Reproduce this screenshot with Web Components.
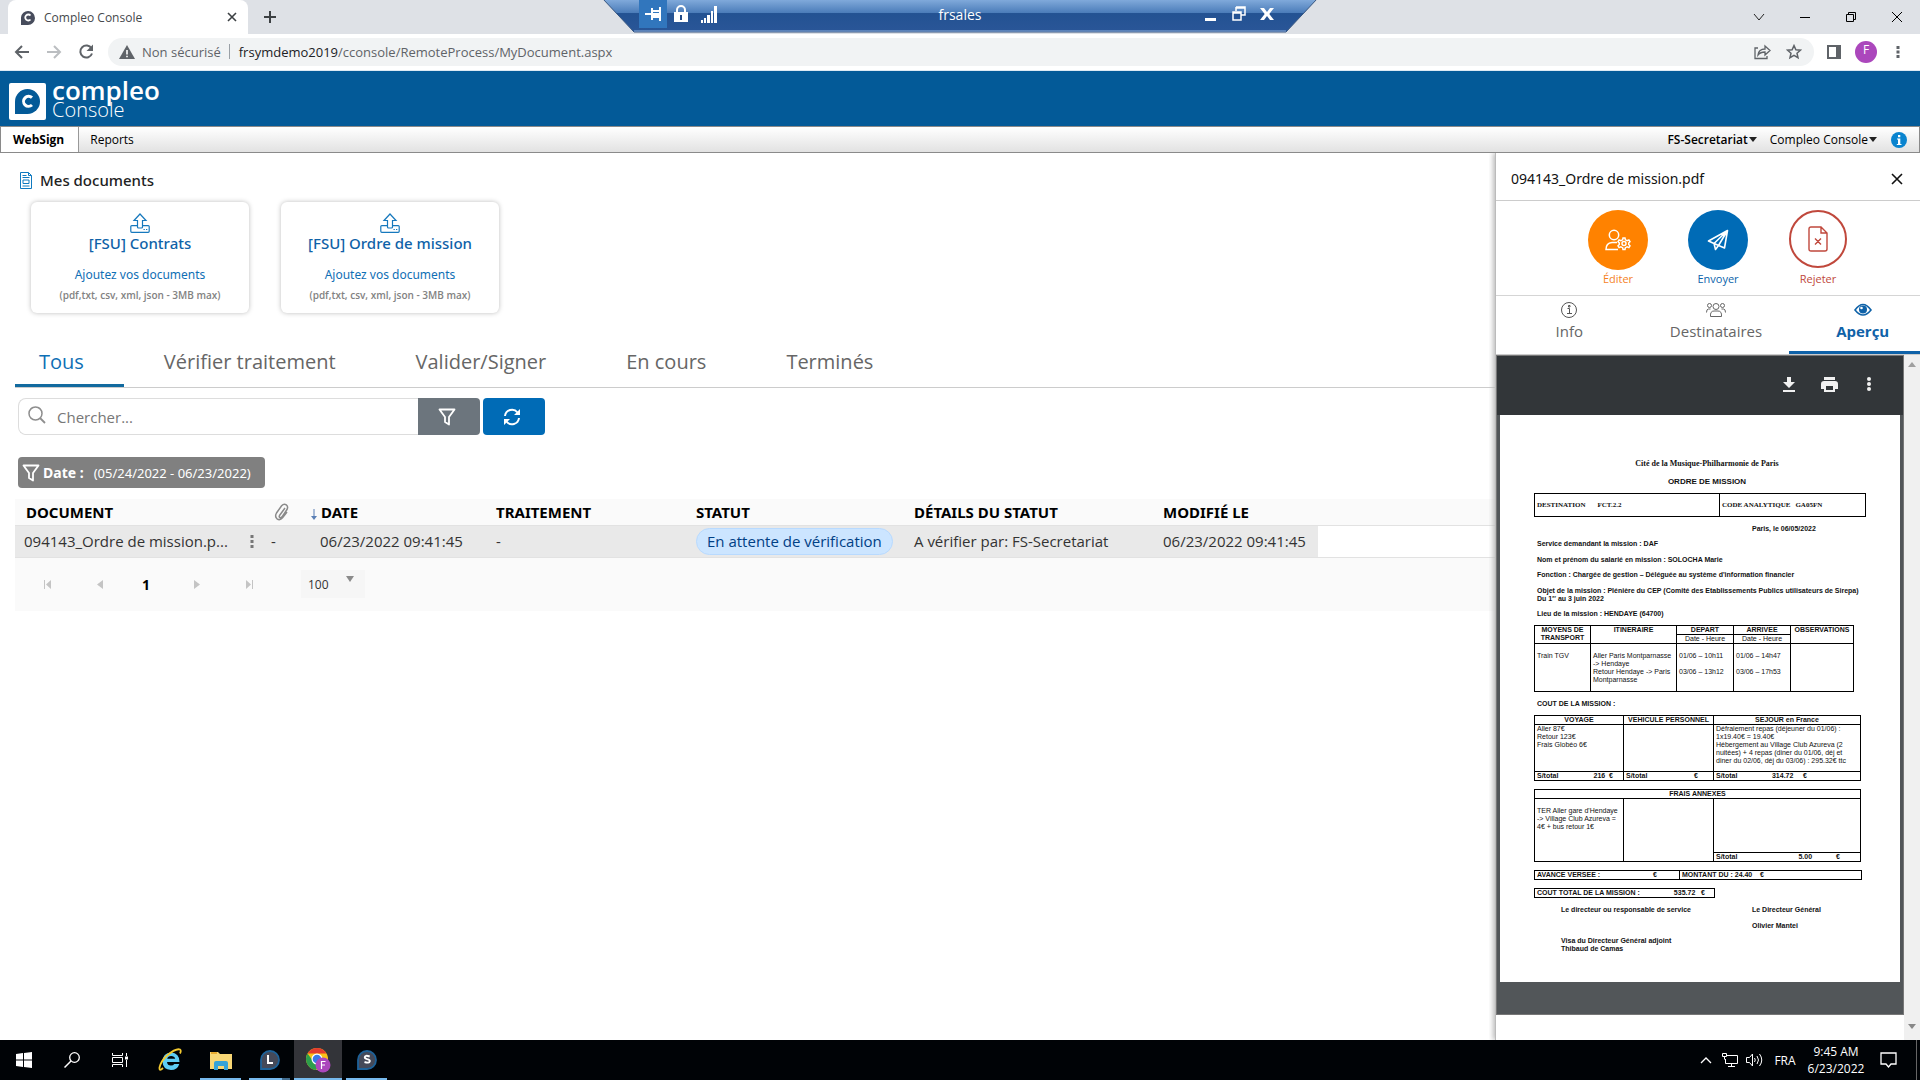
<!DOCTYPE html>
<html lang="fr">
<head>
<meta charset="utf-8">
<title>Compleo Console</title>
<style>
html,body{margin:0;height:100%}
body{font-family:"Open Sans","Noto Sans",sans-serif;font-size:15px;color:#333;background:#fff;overflow:hidden}
</style>
</head>
<body>
<app-desktop></app-desktop>
<script>
const RESET = `*{box-sizing:border-box}
button,input,select{font:inherit;color:inherit;margin:0;padding:0;border:0;background:none;border-radius:0}
button{display:flex;align-items:center;justify-content:center}
a{color:inherit;text-decoration:none}
svg{display:block;flex:none}
h1,h2,p{margin:0;font-weight:400}
table{border-collapse:collapse}`;

function sheet(css, html) {
  const t = document.createElement('template');
  t.innerHTML = `<style>${RESET}${css}</style>${html}`;
  return t;
}
class Shadowed extends HTMLElement {
  constructor() {
    super();
    this.attachShadow({mode: 'open'}).append(this.constructor.template.content.cloneNode(true));
  }
}

/* Remote desktop connection bar */
class RemoteBar extends Shadowed {
  static template = sheet(`
:host{display:block;width:716px;height:33px;color:#fff;font-size:14px}
.bar{height:33px;padding:0 37px 5px;display:flex;align-items:center;justify-content:space-between;position:relative}
.bg{position:absolute;inset:0;width:100%;height:100%}
.side{display:flex;align-items:center;position:relative;width:110px;height:28px}
.side button{width:28px;height:28px}
.side .pin{background:#3176bd}
.name{position:relative}
.side.r{justify-content:flex-end}`,
`<div class="bar">
<svg class="bg" viewBox="0 0 716 33" preserveAspectRatio="none"><defs><linearGradient id="g" x2="0" y2="1"><stop offset="0" stop-color="#84addd"/><stop offset=".42" stop-color="#4b7cb9"/><stop offset=".44" stop-color="#235292"/><stop offset="1" stop-color="#2a5698"/></linearGradient></defs><path d="M1 -1H715L684 32H32Z" fill="url(#g)" stroke="#36557f"/><path d="M32 31H684" stroke="#8fb0dc"/></svg>
<div class="side"><button class="pin" aria-label="Épingler"><svg width="17" height="14"><path d="M0 6h6V1h2v2h6V0h2v14h-2v-3H8v2H6V8H0z M8 5v1h6V5z" fill="#fff" fill-rule="evenodd"/></svg></button><button aria-label="Sécurité"><svg width="16" height="18"><path d="M4 8V5a4 4 0 0 1 8 0v3" fill="none" stroke="#fff" stroke-width="2"/><path d="M1 7h14v10H1z" fill="#fff"/><path d="M7 10h2v5H7z" fill="#204a87"/></svg></button><button aria-label="Connexion"><svg width="16" height="17"><path d="M0 14h2v3H0zM3 12h2v5H3zM6 9h3v8H6zM10 5h2v12h-2zM13 0h3v17h-3z" fill="#fff"/></svg></button></div>
<span class="name">frsales</span>
<div class="side r"><button aria-label="Réduire"><svg width="12" height="14"><path d="M0 11h11v3H0z" fill="#fff"/></svg></button><button aria-label="Restaurer"><svg width="14" height="16"><path d="M4 1h9v8H9M4 1v4M4 2h9M1 6h8v8H1zM1 7h8" fill="none" stroke="#fff" stroke-width="1.500"/></svg></button><button aria-label="Fermer"><svg width="14" height="12"><path d="M0 0h4l3 4 3-4h4L9.300 6 14 12h-4L7 8l-3 4H0l4.700-6z" fill="#fff"/></svg></button></div>
</div>`);
}
customElements.define('remote-bar', RemoteBar);

/* Browser window frame: tab strip and address bar */
class BrowserFrame extends Shadowed {
  static template = sheet(`
:host{display:block;position:relative;color:#5f6368}
remote-bar{position:absolute;top:0;left:calc(50% - 358px)}
.strip{height:34px;background:#dee1e6;display:flex;align-items:center;padding-left:8px}
.tab{width:240px;height:34px;background:#fff;border-radius:8px 8px 0 0;display:flex;align-items:center;padding:0 9px 0 13px;font-size:12px;color:#45484c;gap:9px}
.tab span{flex:1}
.new{width:44px;height:34px}
.win{margin-left:auto;display:flex}
.win button{width:46px;height:30px}
.bar{height:37px;display:flex;align-items:center;padding:0 6px 1px 6px;border-bottom:1px solid #dceaf4}
.nav{width:32px;height:28px}
.url{flex:1;height:28px;border-radius:14px;background:#f1f3f4;display:flex;align-items:center;margin:0 4px 0 6px;padding:0 4px 0 11px;font-size:13px}
.url i{width:1px;height:15px;background:#9aa0a6;margin:0 9px 0 8px}
.url .ns{margin-left:7px}
.addr{flex:1}
.addr b{font-weight:400;color:#202124}
.url button{width:32px;height:28px}
.ava{width:22px;height:22px;border-radius:50%;background:#ab47bc;color:#fff;font-size:12px}`,
`<div class="strip"><div class="tab">
<svg width="14" height="15" viewBox="0 0 14 15"><path d="M0 15V7.500A7 7 0 1 1 7 15z" fill="#474c5c"/><path d="M9.500 5.500A3 3 0 1 0 9.500 9.500" fill="none" stroke="#fff" stroke-width="1.800"/></svg>
<span>Compleo Console</span><button aria-label="Fermer l'onglet"><svg width="14" height="14"><path d="M3 3l8 8M11 3l-8 8" stroke="#3c4043" stroke-width="1.600"/></svg></button></div>
<button class="new" aria-label="Nouvel onglet"><svg width="14" height="14"><path d="M7 1v12M1 7h12" stroke="#3c4043" stroke-width="2"/></svg></button>
<div class="win"><button aria-label="Onglets"><svg width="12" height="12"><path d="M1 3l5 6 5-6" fill="none" stroke="#222"/></svg></button><button aria-label="Réduire"><svg width="12" height="12"><path d="M1 6.500h10" stroke="#000"/></svg></button><button aria-label="Restaurer"><svg width="12" height="12"><path d="M1.500 3.500h7v7h-7zM3.500 3V1.500h7v7H9" fill="none" stroke="#000"/></svg></button><button aria-label="Fermer"><svg width="12" height="12"><path d="M1 1l10 10M11 1L1 11" stroke="#000"/></svg></button></div></div>
<div class="bar">
<button class="nav" aria-label="Précédent"><svg width="16" height="16" viewBox="0 0 16 16"><path d="M15 8H2M8 2L2 8l6 6" fill="none" stroke="#5f6368" stroke-width="2"/></svg></button>
<button class="nav" aria-label="Suivant"><svg width="16" height="16" viewBox="0 0 16 16"><path d="M1 8h13M8 2l6 6-6 6" fill="none" stroke="#bbbec1" stroke-width="2"/></svg></button>
<button class="nav" aria-label="Actualiser"><svg width="16" height="16" viewBox="0 0 16 16"><path d="M13.500 4.500A6 6 0 1 0 14 9.500" fill="none" stroke="#5f6368" stroke-width="2"/><path d="M15 0.500V7H8.500z" fill="#5f6368"/></svg></button>
<div class="url"><svg width="16" height="14" viewBox="0 0 16 14"><path d="M8 0l8 14H0z" fill="#5f6368"/><path d="M7.200 5h1.600v4.500H7.200zM7.200 10.700h1.600v1.600H7.200z" fill="#fff"/></svg><span class="ns">Non sécurisé</span><i></i><span class="addr"><b>frsymdemo2019</b>/cconsole/RemoteProcess/MyDocument.aspx</span>
<button aria-label="Partager"><svg width="17" height="16" viewBox="0 0 17 16"><path d="M4 4H1v10.500h12V12M4 11c.5-4 3-6 7-6V2l5 4.500-5 4.500V8C8 8 6 8.500 4 11z" fill="none" stroke="#5f6368" stroke-width="1.300"/></svg></button>
<button aria-label="Favori"><svg width="16" height="16" viewBox="0 0 16 16"><path d="M8 1.600l1.900 4.200 4.500.4-3.400 3 1 4.500L8 11.300l-4 2.400 1-4.500-3.400-3 4.500-.4z" fill="none" stroke="#5f6368" stroke-width="1.500"/></svg></button></div>
<button class="nav" aria-label="Panneau latéral"><svg width="14" height="14"><path d="M1 1h12v12H1z" fill="none" stroke="#5f6368" stroke-width="2"/><path d="M9 1h4v12H9z" fill="#5f6368"/></svg></button>
<button class="nav" aria-label="Profil"><span class="ava">F</span></button>
<button class="nav" aria-label="Menu"><svg width="4" height="14"><path d="M.5 1h3v3h-3zM.5 5.500h3v3h-3zM.5 10h3v3h-3z" fill="#5f6368"/></svg></button>
</div>
<remote-bar></remote-bar>`);
}
customElements.define('browser-frame', BrowserFrame);

/* Product banner with the menu bar below */
class ConsoleHeader extends Shadowed {
  static template = sheet(`
:host{display:block;color:#000;font-size:12px}
header{height:55px;background:#035a98;display:flex;align-items:center;padding:0 9px;color:#fff}
.mark{margin-top:6px}
.word{margin-left:6px;display:flex;flex-direction:column}
.word b{font-weight:600;font-size:26px;line-height:22px}
.word span{font-size:20px;line-height:18px;font-weight:300}
nav{height:27px;border:1px solid #8a8a8a;background:linear-gradient(#fff,#e2e2e2);display:flex;align-items:center;padding-right:12px}
nav a{padding:0 11px}
nav .on{align-self:stretch;background:#fff;border-right:1px solid #999;font-weight:700;padding:0 14px 0 12px;display:flex;align-items:center}
nav .user{margin-left:auto}
nav button{gap:1px;margin-left:13px}
nav .user{font-weight:600}
nav .info{margin-left:14px}`,
`<header><svg class="mark" width="37" height="37" viewBox="0 0 37 37"><rect width="37" height="37" rx="2" fill="#fff"/><path d="M6 31V18.500A12.500 12.500 0 1 1 18.500 31z" fill="#035a98"/><path d="M23 14.700A5 5 0 1 0 23 22" fill="none" stroke="#fff" stroke-width="3"/></svg>
<div class="word"><b>compleo</b><span>Console</span></div></header>
<nav><a class="on" href="#websign">WebSign</a><a href="#reports">Reports</a>
<button class="user">FS-Secretariat<svg width="8" height="5"><path d="M0 0h8L4 5z" fill="#222"/></svg></button>
<button>Compleo Console<svg width="8" height="5"><path d="M0 0h8L4 5z" fill="#222"/></svg></button>
<button class="info" aria-label="Information"><svg width="16" height="16"><circle cx="8" cy="8" r="8" fill="#0a84cf"/><path d="M6 6.500h3.300V12h1.200v1H5.800v-1H7V7.500H6zM7 3h2.300v2.200H7z" fill="#fff"/></svg></button></nav>`);
}
customElements.define('console-header', ConsoleHeader);

/* Upload tile; its title is slotted */
class UploadCard extends Shadowed {
  static template = sheet(`
:host{display:block}
button{width:218px;height:111px;border-radius:6px;background:#fff;box-shadow:0 0 5px #bdbdbd;flex-direction:column;justify-content:flex-start;padding-top:11px;color:#0f6fb5;font-family:"Noto Sans",sans-serif}
.t{font-size:15px;line-height:20px;font-weight:500;color:#0f62a8}
.a{font-size:12px;line-height:20px;margin-top:12px}
.n{font:600 10px/14px "Open Sans",sans-serif;margin-top:3px;color:#828282}`,
`<button><svg width="20" height="20" viewBox="0 0 20 20" fill="none" stroke="#1678bd" stroke-width="1.200"><path d="M10 1l6 6.500h-3.500V14q0 1-1 1h-3q-1 0-1-1V7.500H4z"/><path d="M7.500 12.600H1.800q-1 0-1 1v4.700q0 1 1 1h16.400q1 0 1-1v-4.700q0-1-1-1h-5.700"/><path d="M13.500 16.500h1.300M16 16.500h1.300"/></svg>
<span class="t"><slot></slot></span><span class="a">Ajoutez vos documents</span><span class="n">(pdf,txt, csv, xml, json - 3MB max)</span></button>`);
}
customElements.define('upload-card', UploadCard);

/* Search field, filters, document table and pager */
class DocumentGrid extends Shadowed {
  static template = sheet(`
:host{display:block;padding-left:15px}
.search{display:flex;height:37px;padding-left:3px;margin-top:10px}
.field{width:400px;border:1px solid #ddd;border-right:0;border-radius:8px 0 0 8px;display:flex;align-items:center;padding-left:9px;gap:11px}
.field input{flex:1;outline:0;height:35px}
.field input::placeholder{color:#777;opacity:1}
.field svg{margin-top:-4px}
.search button{width:62px;border-radius:0 4px 4px 0;background:#6c757d;padding-right:4px}
.search .re{background:#006bb6;border-radius:4px;margin-left:3px}
.chip{margin:22px 0 11px 3px;height:31px;width:247px;border-radius:4px;background:#808080;color:#fff;display:flex;align-items:center;padding:0 4px;font-size:14px;font-family:"Noto Sans",sans-serif}
.chip b{margin:0 10px 0 3px}
.chip span{font-size:13px}
table{width:100%;table-layout:fixed;line-height:24px}
th{background:#fafafa;height:26px;text-align:left;padding:0 0 0 1px;color:#000;font:700 15px/24px "Noto Sans",sans-serif;white-space:nowrap}
td{background:#e9e9e9;height:32px;padding:0 0 0 1px;white-space:nowrap;border-top:1px solid #e2e2e2;border-bottom:1px solid #e2e2e2;color:#333}
td:last-child{background:#fff}
.doc{display:flex;align-items:center;padding-left:8px}
th.doc-h{padding-left:11px}
.doc a{width:220px;margin-right:6px}
.clip{display:block;margin-left:3px}
.pill{display:inline-block;height:27px;line-height:25px;border:1px solid #b8daff;border-radius:14px;background:#cce5ff;color:#004085;padding:0 10px}
.sort{display:inline-block;vertical-align:-4px;margin:0 3px 0 -10px}
.pager{height:53px;background:#fafafa;display:flex;align-items:center;padding-left:7px}
.pager button{width:52px;height:28px}
.pager .cur{width:45px;padding-right:5px;color:#000;font-weight:700;font-size:14px}
.sel{display:flex;align-items:center;background:#f6f6f6;margin-left:26px;width:64px;height:28px;padding-left:7px;position:relative}
.sel select{appearance:none;width:57px;font-size:12px;outline:0}
.sel svg{position:absolute;right:11px;top:6px;pointer-events:none}`,
`<div class="search"><label class="field"><svg width="18" height="18" viewBox="0 0 18 18"><circle cx="7.500" cy="7.500" r="6.500" fill="none" stroke="#8e8e8e" stroke-width="1.500"/><path d="M12 12l5 5" stroke="#8e8e8e" stroke-width="1.800"/></svg><input type="search" placeholder="Chercher..." aria-label="Chercher"></label>
<button aria-label="Filtrer"><svg width="18" height="18" viewBox="0 0 18 18"><path d="M1.500 1.500h15L11 9v7.500L7 14V9z" fill="none" stroke="#fff" stroke-width="1.800" stroke-linejoin="round"/></svg></button>
<button class="re" aria-label="Actualiser"><svg width="18" height="18" viewBox="0 0 18 18"><path d="M2 8a7 7 0 0 1 12.500-3.500M16 10A7 7 0 0 1 3.500 13.500" fill="none" stroke="#fff" stroke-width="2"/><path d="M17 1v6h-6zM1 17v-6h6z" fill="#fff"/></svg></button></div>
<div class="chip"><svg width="18" height="18" viewBox="0 0 18 18"><path d="M1.500 1.500h15L11 9v7.500L7 14V9z" fill="none" stroke="#fff" stroke-width="1.800" stroke-linejoin="round"/></svg><b>Date :</b><span>(05/24/2022 - 06/23/2022)</span></div>
<table><colgroup><col style="width:255px"><col style="width:49px"><col style="width:176px"><col style="width:200px"><col style="width:218px"><col style="width:249px"><col style="width:156px"><col></colgroup>
<thead><tr><th class="doc-h">DOCUMENT</th><th><svg class="clip" width="15" height="18" viewBox="0 0 15 18"><path d="M11 5l-5.500 7.500q-.8 1.500.5 2 1 .5 2-.7l5-7.300q1.500-3-.7-4.700-2.500-1.500-4.700 1L2.500 10Q.5 13.500 3 15.800q3 2 5.500-1L13 9" fill="none" stroke="#8a8a8a" stroke-width="1.500"/></svg></th><th><svg class="sort" width="8" height="14"><path d="M4 1v8" stroke="#5a7fb5"/><path d="M1 8h6l-3 4z" fill="#5a7fb5"/></svg>DATE</th><th>TRAITEMENT</th><th>STATUT</th><th>DÉTAILS DU STATUT</th><th>MODIFIÉ LE</th><th></th></tr></thead>
<tbody><tr><td><div class="doc"><a href="#doc">094143_Ordre de mission.p...</a><svg width="4" height="16"><path d="M.5 2h3v3h-3zM.5 7h3v3h-3zM.5 12h3v3h-3z" fill="#777"/></svg></div></td><td>-</td><td>06/23/2022 09:41:45</td><td>-</td><td><span class="pill">En attente de vérification</span></td><td>A vérifier par: FS-Secretariat</td><td>06/23/2022 09:41:45</td><td></td></tr></tbody></table>
<div class="pager"><button aria-label="Première page"><svg width="8" height="9"><path d="M0 0h1v9H0zM7 0v9L2 4.500z" fill="#c4c4c4"/></svg></button><button aria-label="Page précédente"><svg width="6" height="9"><path d="M6 0v9L0 4.500z" fill="#c4c4c4"/></svg></button><button class="cur">1</button><button aria-label="Page suivante"><svg width="6" height="9"><path d="M0 0v9l6-4.500z" fill="#c4c4c4"/></svg></button><button aria-label="Dernière page"><svg width="8" height="9"><path d="M7 0h1v9H7zM1 0v9l5-4.500z" fill="#c4c4c4"/></svg></button>
<label class="sel"><select aria-label="Lignes par page"><option>100</option></select><svg width="8" height="6"><path d="M0 0h8L4 6z" fill="#8a8a8a"/></svg></label></div>`);
}
customElements.define('document-grid', DocumentGrid);

class DocumentsView extends Shadowed {
  static template = sheet(`
:host{display:block;flex:1;min-width:0}
h1{display:flex;align-items:center;gap:8px;padding:17px 0 0 20px;font:500 15px/20px "Noto Sans",sans-serif;color:#222}
.cards{display:flex;gap:32px;padding:12px 31px 0}
.tabs{display:flex;margin:42px 0 0 15px;border-bottom:1px solid #ccc;font-size:20px;color:#666}
.tabs button{height:32px;padding:0 40px 15px 24px;margin-right:16px;border-bottom:3px solid transparent;line-height:16px}
.tabs .on{color:#0f6fb5;border-color:#126a9f}`,
`<h1><svg width="12" height="17" viewBox="0 0 12 17" fill="none" stroke="#0f7ac0"><path d="M.5 .5h8l3 3v13H.5zM8.500 .5v3h3M2.500 3.500h4M2.500 5.500h7M3 8h6v3.500H3zM2.500 14h7"/></svg>Mes documents</h1>
<div class="cards"><upload-card>[FSU] Contrats</upload-card><upload-card>[FSU] Ordre de mission</upload-card></div>
<div class="tabs"><button class="on">Tous</button><button>Vérifier traitement</button><button>Valider/Signer</button><button>En cours</button><button>Terminés</button></div>
<document-grid></document-grid>`);
}
customElements.define('documents-view', DocumentsView);

/* One printed page of the mission order */
class MissionOrder extends Shadowed {
  static template = sheet(`
:host{display:block;background:#fff;color:#111;font:7px/8px "Liberation Sans",sans-serif;padding:43px 34px 0;height:567px}
h1,h2{text-align:center;font-weight:700;font-size:8px;line-height:12px;padding-left:14px}
h1{font-family:"Liberation Serif",serif}
h2{margin:6px 0 5px}
p{font-weight:700;margin:0 0 0 3px;white-space:nowrap}
table{table-layout:fixed}
td,th{border:1px solid #000;padding:0 2px;text-align:left;vertical-align:top;line-height:8px;white-space:nowrap}
th{text-align:center}
.serif td{font:700 7px/8px "Liberation Serif",serif;height:23px;vertical-align:middle}
.serif span{margin-left:12px}
.serif .n{margin-left:5px}
.thin{font-weight:400}
.b td{font-weight:700}
.row{display:flex}
.row span:nth-child(2){margin-left:auto}
sup{font-size:4px;line-height:0}`,
`<h1>Cité de la Musique-Philharmonie de Paris</h1><h2>ORDRE DE MISSION</h2>
<table class="serif"><colgroup><col style="width:185px"><col style="width:146px"></colgroup><tr><td>DESTINATION<span>FCT.2.2</span></td><td>CODE ANALYTIQUE<span class="n">GA05FN</span></td></tr></table>
<p style="margin:8px 0 0 218px">Paris, le 06/05/2022</p>
<p style="margin-top:7px">Service demandant la mission : DAF</p>
<p style="margin-top:8px">Nom et prénom du salarié en mission : SOLOCHA Marie</p>
<p style="margin-top:7px">Fonction : Chargée de gestion – Déléguée au système d'information financier</p>
<p style="margin-top:8px">Objet de la mission : Plénière du CEP (Comité des Etablissements Publics utilisateurs de Sirepa)</p>
<p>Du 1<sup>er</sup> au 3 juin 2022</p>
<p style="margin:7px 0 7px 3px">Lieu de la mission : HENDAYE (64700)</p>
<table><colgroup><col style="width:56px"><col style="width:86px"><col style="width:57px"><col style="width:57px"><col style="width:63px"></colgroup>
<tr><th rowspan="2">MOYENS DE<br>TRANSPORT</th><th rowspan="2">ITINERAIRE</th><th>DEPART</th><th>ARRIVEE</th><th rowspan="2">OBSERVATIONS</th></tr><tr><th class="thin">Date - Heure</th><th class="thin">Date - Heure</th></tr>
<tr style="height:48px"><td><br>Train TGV</td><td><br>Aller Paris Montparnasse<br>-&gt; Hendaye<br>Retour Hendaye -&gt; Paris<br>Montparnasse</td><td><br>01/06 – 10h11<br><br>03/06 – 13h12</td><td><br>01/06 – 14h47<br><br>03/06 – 17h53</td><td></td></tr></table>
<p style="margin:8px 0 7px 3px">COUT DE LA MISSION :</p>
<table><colgroup><col style="width:89px"><col style="width:90px"><col style="width:147px"></colgroup>
<tr><th>VOYAGE</th><th>VEHICULE PERSONNEL</th><th>SEJOUR en France</th></tr>
<tr style="height:47px"><td>Aller 87€<br>Retour 123€<br>Frais Globéo 6€</td><td></td><td>Défraiement repas (déjeuner du 01/06) :<br>1x19.40€ = 19.40€<br>Hébergement au Village Club Azureva (2<br>nuitées) + 4 repas (diner du 01/06, déj et<br>diner du 02/06, déj du 03/06) : 295.32€ ttc</td></tr>
<tr class="b"><td><div class="row" style="padding-right:8px"><span>S/total</span><span>216&nbsp; €</span></div></td><td><div class="row" style="padding-right:13px"><span>S/total</span><span>€</span></div></td><td><div class="row" style="padding-right:51px"><span>S/total</span><span>314.72 &nbsp; &nbsp; €</span></div></td></tr></table>
<table style="margin-top:8px"><colgroup><col style="width:89px"><col style="width:90px"><col style="width:147px"></colgroup>
<tr><th colspan="3">FRAIS ANNEXES</th></tr>
<tr style="height:54px"><td rowspan="2"><br>TER Aller gare d'Hendaye<br>-&gt; Village Club Azureva =<br>4€ + bus retour 1€</td><td rowspan="2"></td><td></td></tr>
<tr class="b"><td><div class="row" style="padding-right:18px"><span>S/total</span><span>5.00</span><span style="margin-left:24px">€</span></div></td></tr></table>
<table class="b" style="margin-top:8px"><colgroup><col style="width:145px"><col style="width:182px"></colgroup><tr><td><div class="row" style="padding-right:20px"><span>AVANCE VERSEE :</span><span>€</span></div></td><td>MONTANT DU : 24.40 &nbsp; &nbsp;€</td></tr></table>
<table class="b" style="margin-top:8px"><colgroup><col style="width:180px"></colgroup><tr><td><div class="row" style="padding-right:7px"><span>COUT TOTAL DE LA MISSION :</span><span>535.72 &nbsp; €</span></div></td></tr></table>
<div class="row" style="padding:8px 0 0 24px"><p style="width:188px">Le directeur ou responsable de service</p><p>Le Directeur Général<br><br>Olivier Mantei</p></div>
<p style="margin:7px 0 0 27px">Visa du Directeur Général adjoint<br>Thibaud de Camas</p>`);
}
customElements.define('mission-order', MissionOrder);

/* Right-hand panel: actions, tabs and PDF preview */
class PreviewPanel extends Shadowed {
  static template = sheet(`
:host{display:flex;flex-direction:column;width:425px;border-left:1px solid #bbb;box-shadow:-2px 0 5px #bbb;background:#fff;overflow:hidden;clip-path:inset(0 0 0 -6px)}
.head{height:48px;border-bottom:1px solid #ccc;display:flex;align-items:center;justify-content:space-between;padding:4px 17px 0 15px;color:#111;font:14px/20px "Noto Sans",sans-serif}
.acts{height:95px;width:444px;border-bottom:1px solid #d5d5d5;display:flex;justify-content:center;padding-top:9px;font-size:11px}
.acts button{width:100px;flex-direction:column;justify-content:flex-start;line-height:18px}
.acts i{width:60px;height:60px;border-radius:50%;display:flex;align-items:center;justify-content:center}
.o{color:#f5821f}.o i{background:#ff8200}
.e{color:#0b63ab}.e i{background:#006bb6}
.r{color:#c0483c}.acts .r i{border:2px solid #c0483c;width:58px;height:58px;margin-bottom:2px}
.tabs{width:440px;display:flex;height:59px;border-bottom:1px solid #ccc;color:#666}
.tabs button{flex:1;flex-direction:column;font-size:15px;line-height:22px;gap:2px;padding-bottom:3px;border-bottom:3px solid transparent}
.tabs .on{color:#0f62a8;border-color:#0f62a8;font-weight:700}
.body{flex:1;display:flex;min-height:0}
.pdf{flex:1;height:660px;border:1px solid #777;background:#525659}
.tool{height:59px;background:#323639;display:flex;align-items:center;justify-content:flex-end;padding:0 14px 3px 0}
.tool button{width:40px;height:40px}
mission-order{margin:0 3px}
.bar{width:16px;background:#f0f0f0;display:flex;flex-direction:column;justify-content:space-between;align-items:center;padding:7px 0 11px}`,
`<div class="head"><span>094143_Ordre de mission.pdf</span><button aria-label="Fermer"><svg width="12" height="12"><path d="M1 1l10 10M11 1L1 11" stroke="#111" stroke-width="1.600"/></svg></button></div>
<div class="acts">
<button class="o"><i><svg width="26" height="22" viewBox="0 0 26 22" fill="none" stroke="#fff" stroke-width="1.500"><circle cx="9" cy="6" r="4.700"/><path d="M12 13.500H7q-6 .5-6 7h12"/><circle cx="19" cy="14.500" r="2"/><path d="M18 9h2l.4 1.800 1.800.9 1.700-.8 1.100 1.700-1.300 1.400v1.500l1.300 1.300-1.100 1.800-1.700-.8-1.800.9L20 20.500h-2l-.4-1.800-1.800-.9-1.700.8-1.100-1.800 1.300-1.300V14l-1.300-1.400 1.100-1.700 1.700.8 1.800-.9z"/></svg></i>Éditer</button>
<button class="e"><i><svg width="22" height="22" viewBox="0 0 22 22" fill="none" stroke="#fff" stroke-width="1.600" stroke-linejoin="round"><path d="M20.500 1.500L1.500 12l5.500 2.500L17.500 19zM20.500 1.500L7 14.500l1.500 6 3-4M20.500 1.500l-9 15"/></svg></i>Envoyer</button>
<button class="r"><i><svg width="20" height="26" viewBox="0 0 20 26" fill="none" stroke="#c0483c" stroke-width="1.400"><path d="M3 1h10l6 6v16q0 2-2 2H3q-2 0-2-2V3q0-2 2-2zM13 1v6h6M7 12.500l6 6M13 12.500l-6 6"/></svg></i>Rejeter</button></div>
<div class="tabs"><button><svg width="16" height="16"><circle cx="8" cy="8" r="7.500" fill="none" stroke="#555"/><path d="M6.500 6.500h2V11.500M6 11.500h5M7.500 3.500h1.500v1.500H7.500z" fill="none" stroke="#555"/></svg>Info</button>
<button><svg width="20" height="16" viewBox="0 0 20 16" fill="none" stroke="#666"><circle cx="10" cy="4.500" r="3"/><circle cx="3.500" cy="3.500" r="2"/><circle cx="16.500" cy="3.500" r="2"/><path d="M4.500 14.500q-.5-5.500 3.500-5.500h4q4 0 3.500 5.500zM.5 10.500q0-3.500 2-3.500h2M19.500 10.500q0-3.500-2-3.500h-2"/></svg>Destinataires</button>
<button class="on"><svg width="18" height="16" viewBox="0 0 18 16"><path d="M1 8q8-11 16 0-8 10-16 0z" fill="none" stroke="#0f62a8" stroke-width="1.600"/><circle cx="9" cy="7.500" r="4" fill="#0f62a8"/><circle cx="7.500" cy="6" r="1.300" fill="#fff"/></svg>Aperçu</button></div>
<div class="body"><div class="pdf"><div class="tool">
<button aria-label="Télécharger"><svg width="12" height="15"><path d="M4 0h4v5h4l-6 6-6-6h4zM0 13h12v2H0z" fill="#f1f1f1"/></svg></button>
<button aria-label="Imprimer"><svg width="17" height="15"><path d="M3 0h11v3H3zM3 4h11q3 0 3 3v5h-3v3H3v-3H0V7q0-3 3-3zM5 9v4h7V9z" fill="#f1f1f1" fill-rule="evenodd"/></svg></button>
<button aria-label="Plus"><svg width="4" height="14"><circle cx="2" cy="2" r="2" fill="#f1f1f1"/><circle cx="2" cy="7" r="2" fill="#f1f1f1"/><circle cx="2" cy="12" r="2" fill="#f1f1f1"/></svg></button></div><mission-order></mission-order></div>
<div class="bar"><svg width="8" height="5"><path d="M4 0l4 5H0z" fill="#a0a0a0"/></svg><svg width="8" height="5"><path d="M4 5l4-5H0z" fill="#888"/></svg></div></div>`);
}
customElements.define('preview-panel', PreviewPanel);

class TaskBar extends Shadowed {
  static template = sheet(`
:host{display:flex;height:40px;background:#000306;color:#fff;font-size:12px;line-height:17px}
button{width:48px;height:40px}
.ie{width:52px}
.run{width:41px;margin:0 4px;border-bottom:2px solid #76b9ed;padding-top:2px}
.run.two{border-image:linear-gradient(90deg,#76b9ed 78%,#426d8f 78%) 1}
.act{border-bottom:2px solid #76b9ed;background:#333439;padding-top:2px}
.tray{margin-left:auto;display:flex;align-items:center}
.tray button{width:24px}
.tray .fra{width:38px}
.tray .clock{width:58px;margin-left:3px;display:block;text-align:center;height:36px}
.clock span{display:block}
.tray .note{width:46px;margin-right:5px}
.show{width:4px;align-self:stretch;border-left:1px solid #666}`,
`<button aria-label="Démarrer"><svg width="16" height="16"><path d="M0 2l7-1v6.500H0zM8 1l8-1v7.500H8zM0 8.500h7V15l-7-1zM8 8.500h8V16l-8-1z" fill="#fff"/></svg></button>
<button aria-label="Rechercher"><svg width="16" height="16"><circle cx="10.500" cy="5.500" r="4.800" fill="none" stroke="#fff" stroke-width="1.300"/><path d="M7 9L.5 15.500" stroke="#fff" stroke-width="1.500"/></svg></button>
<button aria-label="Vue des tâches"><svg width="16" height="16" fill="none" stroke="#fff"><path d="M.5 1v2.500h10V1M.5 15v-2.500h10V15M.5 5.500h10v5H.5zM14.500 1v3M14.500 8v7"/><path d="M13 4.500h3v3h-3z" fill="#fff" stroke="none"/></svg></button>
<button class="ie" aria-label="Internet Explorer"><svg width="24" height="24" viewBox="0 0 24 24"><path d="M21.500 14H9q.3 3.500 4 3.500 2.300 0 3.300-1.500h5Q19.500 22 13 22q-8.300-.5-8.500-8.500Q4.700 5 13 4.500q8.500.5 8.500 9.500zM9.200 10.800h8Q16.500 8 13.200 8q-3.200 0-4 2.800z" fill="#5ecdf5"/><path d="M5 20q-4 4-3.500-.5Q3 13 9 7.500 18 0 22 1.500q1.500 1 0 4" fill="none" stroke="#f3ca30" stroke-width="1.800"/></svg></button>
<button class="run" aria-label="Explorateur"><svg width="22" height="19"><path d="M0 1h8l2 2h12v15H0z" fill="#f8d775"/><path d="M1 1h6v2H1z" fill="#e8ab2e"/><path d="M4 19v-7q0-2 2-2h10q2 0 2 2v7h-4v-4H8v4z" fill="#35a3d8"/></svg></button>
<button class="run two" aria-label="L"><svg width="20" height="20"><path d="M1 19V10a9 9 0 1 1 9 9z" fill="#454a59" stroke="#1d6299" stroke-width="1.800"/><path d="M8 5v8h5" fill="none" stroke="#fff" stroke-width="2"/></svg></button>
<button class="act" aria-label="Chrome"><svg width="26" height="26" viewBox="0 0 26 26"><circle cx="12" cy="12" r="11" fill="#fbc116"/><path d="M2.500 6.500A11 11 0 0 1 21.500 6.500H12z" fill="#e33b2e"/><path d="M2.500 6.500A11 11 0 0 0 11 23l4-7-7-2z" fill="#2c9e4b"/><circle cx="12" cy="12" r="5.500" fill="#fff"/><circle cx="12" cy="12" r="4.300" fill="#3b78e7"/><circle cx="18" cy="18" r="7.500" fill="#ab47bc"/><path d="M16.500 22v-7.500h4M16.500 18h3.500" fill="none" stroke="#fff" stroke-width="1.200"/></svg></button>
<button class="run" aria-label="S"><svg width="20" height="20"><path d="M1 19V10a9 9 0 1 1 9 9z" fill="#454a59" stroke="#1d6299" stroke-width="1.800"/><path d="M12.700 6.500Q8 4.800 7.800 7.200q0 1.300 2.400 1.900 2.800.6 2.600 2.200Q12.200 13.600 7.500 12" fill="none" stroke="#fff" stroke-width="1.900"/></svg></button>
<div class="tray"><button aria-label="Icônes cachées"><svg width="12" height="8"><path d="M1 7l5-5 5 5" fill="none" stroke="#fff" stroke-width="1.300"/></svg></button>
<button aria-label="Réseau"><svg width="16" height="14" fill="none" stroke="#fff"><path d="M5 2.500h10.500v8H3.500V6M9.500 10.500v3M6 13.500h7M.5 .5h4v3h-4zM2.500 3.500v3"/></svg></button>
<button aria-label="Volume"><svg width="17" height="14" fill="none" stroke="#fff"><path d="M.5 4.500h3l3-3.500v12l-3-3.500h-3zM8.500 5q1.500 2 0 4M11 3q3 4 0 8M13.500 1q4.500 6 0 12"/></svg></button>
<button class="fra">FRA</button><button class="clock"><span>9:45 AM</span><span>6/23/2022</span></button>
<button class="note" aria-label="Notifications"><svg width="17" height="16"><path d="M1 1h15v11h-5l-2.500 3L6 12H1z" fill="none" stroke="#fff" stroke-width="1.300"/></svg></button><span class="show"></span></div>`);
}
customElements.define('task-bar', TaskBar);

class AppDesktop extends Shadowed {
  static template = sheet(`
:host{display:flex;flex-direction:column;height:100vh}
main{flex:1;display:flex;min-height:0}`,
`<browser-frame></browser-frame><console-header></console-header>
<main><documents-view></documents-view><preview-panel></preview-panel></main><task-bar></task-bar>`);
}
customElements.define('app-desktop', AppDesktop);
</script>
</body>
</html>
